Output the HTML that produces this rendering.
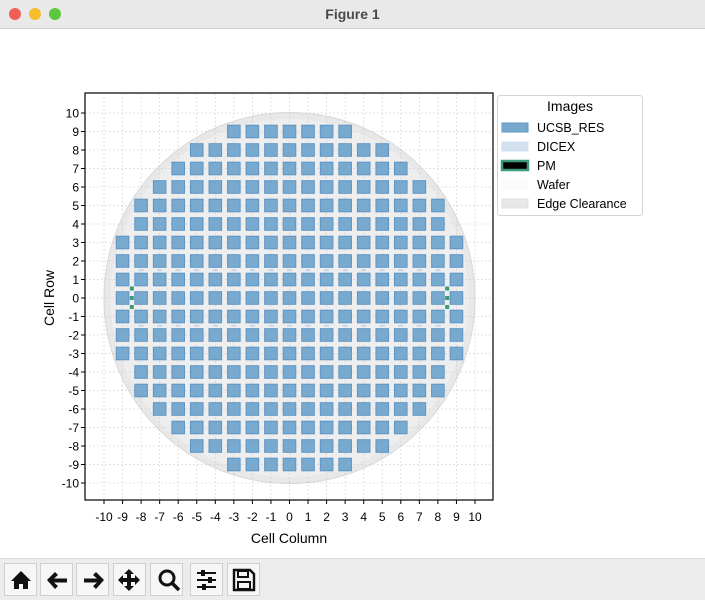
<!DOCTYPE html>
<html><head><meta charset="utf-8"><style>
body{margin:0;width:705px;height:599px;overflow:hidden;background:#fff;font-family:"Liberation Sans","DejaVu Sans",sans-serif}
#title{position:absolute;left:0;top:0;width:705px;height:28px;background:#e9e9e9;border-bottom:1px solid #d4d4d4;text-align:center;line-height:29px;font-size:14px;font-weight:bold;color:#4a4a4a}
.dot{position:absolute;top:8px;width:12px;height:12px;border-radius:50%}
#tb{position:absolute;left:0;top:558px;width:705px;height:41px;background:#ececec;border-top:1px solid #ddd}
.b{position:absolute;top:4px;width:33px;height:33px;background:#f6f6f6;border:1px solid #cfcfcf;box-sizing:border-box}
</style></head><body>
<div id="title">Figure 1</div>
<div class="dot" style="left:9px;background:#ee5f57"></div>
<div class="dot" style="left:29px;background:#f5bd2f"></div>
<div class="dot" style="left:49px;background:#5ec73f"></div>
<svg id="s" width="705" height="530" style="position:absolute;left:0;top:29px" viewBox="0 29 705 530" font-family="Liberation Sans, DejaVu Sans, sans-serif"></svg>
<div id="tb">
<div class="b" style="left:4px"></div><div class="b" style="left:40px"></div><div class="b" style="left:76px"></div><div class="b" style="left:113px"></div><div class="b" style="left:150px"></div><div class="b" style="left:190px"></div><div class="b" style="left:227px"></div>
<svg width="270" height="41" style="position:absolute;left:0;top:0">
<g fill="#111">
<path d="M11 22 L21 12 L31 22 L28 22 L28 30 L23 30 L23 25 L19 25 L19 30 L14 30 L14 22Z"/>
<path d="M47 21 L55 13 L58 16 L54 19.5 L67 19.5 L67 23.5 L54 23.5 L58 27 L55 30Z"/>
<path d="M104 21 L96 13 L93 16 L97 19.5 L84 19.5 L84 23.5 L97 23.5 L93 27 L96 30Z"/>
<path d="M129 10 L134 15 L131 15 L131 19 L135 19 L135 16 L140 21 L135 26 L135 23 L131 23 L131 27 L134 27 L129 32 L124 27 L127 27 L127 23 L123 23 L123 26 L118 21 L123 16 L123 19 L127 19 L127 15 L124 15Z"/>
</g>
<circle cx="167" cy="19" r="7" fill="none" stroke="#111" stroke-width="3"/>
<path d="M172 24 L179 31" stroke="#111" stroke-width="3.5"/>
<g stroke="#111" stroke-width="2"><path d="M197 14H216M197 21H216M197 28H216"/></g>
<g fill="#111"><rect x="201" y="11" width="4" height="6"/><rect x="208" y="18" width="4" height="6"/><rect x="202" y="25" width="4" height="6"/></g>
<path d="M234 11H250L254 15V31H234Z" fill="none" stroke="#111" stroke-width="2.4"/>
<rect x="238" y="12" width="10" height="6" fill="none" stroke="#111" stroke-width="2"/>
<rect x="238" y="23" width="12" height="7" fill="none" stroke="#111" stroke-width="2"/>
</svg>
</div>
<script>
var s=document.getElementById('s'),h='';
var X=function(c){return 289.5+c*18.55},Y=function(r){return 298-r*18.5};
h+='<rect x="85" y="93" width="408" height="407" fill="#fff"/>';
h+='<circle cx="289.5" cy="298" r="185.5" fill="#e8e8e8" stroke="#d8d8d8"/>';
h+='<circle cx="289.5" cy="298" r="179" fill="#eeeeee"/>';
for(var i=-10;i<=10;i++){h+='<line x1="'+X(i)+'" y1="93" x2="'+X(i)+'" y2="500" stroke="#ccc" stroke-dasharray="1.5,2.5" stroke-width="0.8"/>';
h+='<line x1="85" y1="'+Y(i)+'" x2="493" y2="'+Y(i)+'" stroke="#ccc" stroke-dasharray="1.5,2.5" stroke-width="0.8"/>';}
var rows={9:3,8:5,7:6,6:7,5:8,4:8,3:9,2:9,1:9,0:9};
for(var r=-9;r<=9;r++){var n=rows[Math.abs(r)];for(var c=-n;c<=n;c++){
h+='<rect x="'+(X(c)-6.3)+'" y="'+(Y(r)-6.3)+'" width="12.6" height="12.6" fill="rgb(120,170,208)" stroke="rgb(95,148,195)" stroke-width="1"/>';}}
[1.5,-1.5].forEach(function(r){for(var c=-8;c<=8;c++)h+='<rect x="'+(X(c)-2.5)+'" y="'+(Y(r)-1)+'" width="5" height="2" fill="#c5d6ec"/>';});
[-8.5,8.5].forEach(function(c){[288.5,298,307].forEach(function(y){h+='<rect x="'+(X(c)-2)+'" y="'+(y-2)+'" width="4" height="4" fill="#3e9a78"/>';});});
h+='<rect x="85" y="93" width="408" height="407" fill="none" stroke="#000" stroke-width="1.2"/>';
for(var i=-10;i<=10;i++){
h+='<line x1="'+X(i)+'" y1="500" x2="'+X(i)+'" y2="504" stroke="#000"/>';
h+='<text x="'+X(i)+'" y="521" font-size="12" text-anchor="middle">'+i+'</text>';
h+='<line x1="81" y1="'+Y(i)+'" x2="85" y2="'+Y(i)+'" stroke="#000"/>';
h+='<text x="79" y="'+(Y(i)+4.5)+'" font-size="12" text-anchor="end">'+i+'</text>';}
h+='<text x="289" y="543" font-size="14" text-anchor="middle">Cell Column</text>';
h+='<text transform="translate(54,298) rotate(-90)" font-size="14" text-anchor="middle">Cell Row</text>';
h+='<rect x="497.5" y="95.5" width="145" height="120" rx="3" fill="#fff" stroke="#d5d5d5"/>';
h+='<text x="570" y="111" font-size="14" text-anchor="middle">Images</text>';
var L=[['UCSB_RES','rgb(120,170,208)','rgb(95,148,195)'],['DICEX','#d3e0f0','#d3e0f0'],['PM','#000','#3e9a78'],['Wafer','#fdfafa','#fdfafa'],['Edge Clearance','#e8e8e8','#e0e0e0']];
L.forEach(function(e,k){var y=127+k*19;h+='<rect x="502" y="'+(y-4)+'" width="26" height="9" fill="'+e[1]+'" stroke="'+e[2]+'" stroke-width="'+(k==2?2.5:1)+'"/>';
h+='<text x="537" y="'+(y+5)+'" font-size="12.5">'+e[0]+'</text>';});
s.innerHTML=h;
</script>
</body></html>
